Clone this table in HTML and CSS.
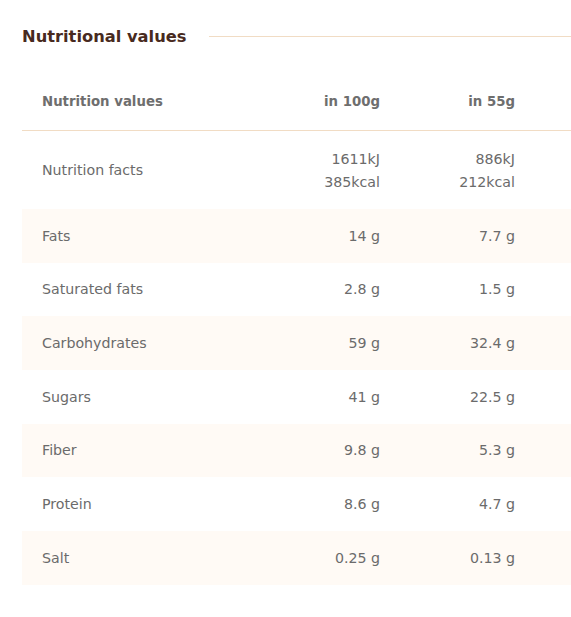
FILE: index.html
```html
<!DOCTYPE html>
<html lang="en">
<head>
<meta charset="utf-8">
<title>Nutritional values</title>
<link rel="stylesheet" href="styles.css">
</head>
<body>
<section class="nutrition">
  <div class="heading">
    <h2 class="title">Nutritional values</h2>
    <span class="rule"></span>
  </div>
  <div class="table">
    <div class="row head">
      <div class="label">Nutrition values</div>
      <div class="num">in 100g</div>
      <div class="num">in 55g</div>
    </div>
    <div class="row tall">
      <div class="label">Nutrition facts</div>
      <div class="num"><span>1611kJ</span><span>385kcal</span></div>
      <div class="num"><span>886kJ</span><span>212kcal</span></div>
    </div>
    <div class="row shade">
      <div class="label">Fats</div>
      <div class="num">14 g</div>
      <div class="num">7.7 g</div>
    </div>
    <div class="row">
      <div class="label">Saturated fats</div>
      <div class="num">2.8 g</div>
      <div class="num">1.5 g</div>
    </div>
    <div class="row shade">
      <div class="label">Carbohydrates</div>
      <div class="num">59 g</div>
      <div class="num">32.4 g</div>
    </div>
    <div class="row">
      <div class="label">Sugars</div>
      <div class="num">41 g</div>
      <div class="num">22.5 g</div>
    </div>
    <div class="row shade">
      <div class="label">Fiber</div>
      <div class="num">9.8 g</div>
      <div class="num">5.3 g</div>
    </div>
    <div class="row">
      <div class="label">Protein</div>
      <div class="num">8.6 g</div>
      <div class="num">4.7 g</div>
    </div>
    <div class="row shade">
      <div class="label">Salt</div>
      <div class="num">0.25 g</div>
      <div class="num">0.13 g</div>
    </div>
  </div>
</section>
</body>
</html>
```

FILE: styles.css
```css
* { box-sizing: border-box; }
html, body { margin: 0; padding: 0; background: #fff; }
body {
  font-family: "DejaVu Sans", "Open Sans", sans-serif;
  color: #6b6b6b;
}
.nutrition {
  padding: 24px 0 0 22px;
}
.heading {
  display: flex;
  align-items: center;
  gap: 22px;
  height: 24px;
}
.title {
  margin: 0;
  font-size: 16.3px;
  font-weight: bold;
  color: #482a20;
  white-space: nowrap;
}
.rule {
  flex: 1;
  height: 1px;
  background: #f1dcc4;
}
.table {
  margin-top: 24px;
}
.row {
  display: grid;
  grid-template-columns: 1fr 135px 135px;
  align-items: center;
  height: 53.67px;
  padding: 0 56px 0 20px;
  font-size: 14.2px;
}
.row.head {
  height: 59px;
  border-bottom: 1px solid #f1dcc4;
  font-size: 13.3px;
  font-weight: bold;
  color: #6e6e6e;
}
.row.tall { height: 78px; }
.row.shade { background: #fffaf5; }
.num {
  text-align: right;
  display: flex;
  flex-direction: column;
  align-items: flex-end;
  gap: 7px;
}
```
